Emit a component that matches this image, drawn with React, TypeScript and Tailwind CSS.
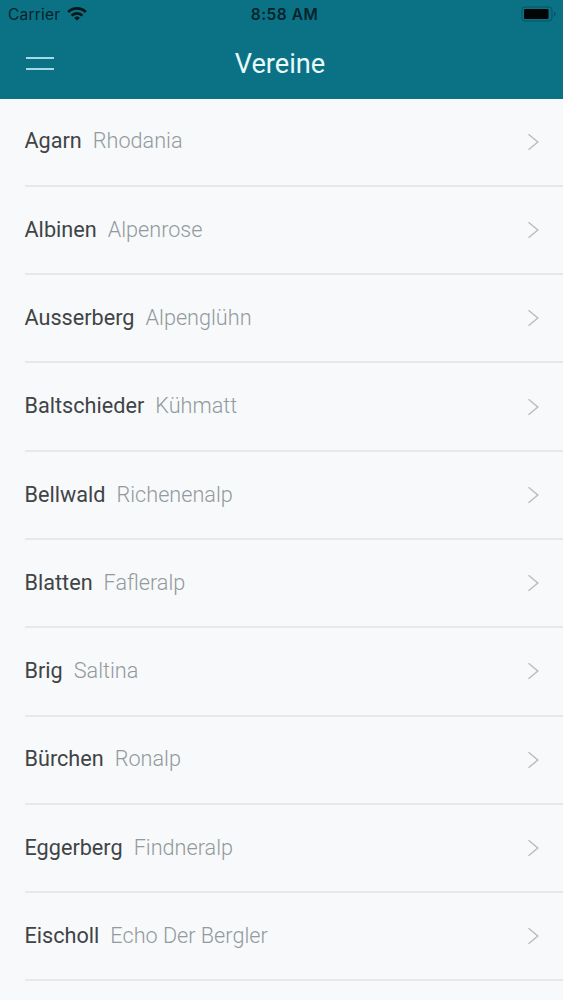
interface Club {
  place: string;
  name: string;
}

const CLUBS: Club[] = [
  { place: "Agarn", name: "Rhodania" },
  { place: "Albinen", name: "Alpenrose" },
  { place: "Ausserberg", name: "Alpenglühn" },
  { place: "Baltschieder", name: "Kühmatt" },
  { place: "Bellwald", name: "Richenenalp" },
  { place: "Blatten", name: "Fafleralp" },
  { place: "Brig", name: "Saltina" },
  { place: "Bürchen", name: "Ronalp" },
  { place: "Eggerberg", name: "Findneralp" },
  { place: "Eischoll", name: "Echo Der Bergler" },
];

function WifiIcon() {
  return (
    <svg width="20" height="14" viewBox="0 0 20 14" fill="none" stroke="#03171b" strokeWidth="2.6">
      <path d="M1.2 5a12.4 12.4 0 0 1 17.6 0" />
      <path d="M4.6 8.6a7.6 7.6 0 0 1 10.8 0" />
      <path d="M10 13.6 7.2 10.9a4 4 0 0 1 5.6 0z" fill="#03171b" stroke="none" />
    </svg>
  );
}

function BatteryIcon() {
  return (
    <svg width="35" height="16" viewBox="0 0 35 16">
      <rect x="1" y="1" width="30" height="14" rx="3" fill="none" stroke="#075361" />
      <rect x="3" y="3" width="24.5" height="10" rx="1.2" fill="#020607" />
      <path d="M33 5.8c2.2.7 2.2 3.9 0 4.6z" fill="#075361" />
    </svg>
  );
}

function StatusBar() {
  return (
    <div className="grid h-7 grid-cols-3 items-center pr-[7px] pl-[8px] text-[#04232a]">
      <div className="flex items-center gap-[7px]">
        <span className="pt-[2px] text-[15.5px] tracking-[0.2px]">Carrier</span>
        <WifiIcon />
      </div>
      <span className="pt-[2px] pl-[5px] text-center text-[15.5px] font-semibold tracking-[0.5px]">8:58 AM</span>
      <div className="flex justify-end">
        <BatteryIcon />
      </div>
    </div>
  );
}

function Header() {
  return (
    <header className="h-[99px] bg-[#0b7285] font-['Inter','Liberation_Sans',sans-serif]">
      <StatusBar />
      <div className="grid h-[71px] grid-cols-[60px_1fr_60px] items-center">
        <button aria-label="Menu" className="ml-[25.5px] flex w-[28px] flex-col gap-[9px]">
          <span className="h-[2px] bg-[#a5dbe6]" />
          <span className="h-[2px] bg-[#a5dbe6]" />
        </button>
        <h1 className="pt-[2px] pr-[3px] text-center font-['Roboto',sans-serif] text-[27.2px] text-[#e8fafc]">
          Vereine
        </h1>
      </div>
    </header>
  );
}

function ClubRow({ club }: { club: Club }) {
  return (
    <li className="ml-[24.5px] flex h-[88.3px] items-center border-b-2 border-[#e6e9eb] pr-6">
      <span className="text-[21.65px] text-[#3f4447]">{club.place}</span>
      <span className="ml-[11px] text-[21.65px] font-light text-[#929a9e]">{club.name}</span>
      <svg className="ml-auto" width="12" height="18" viewBox="0 0 12 18" fill="none" stroke="#b9bec2" strokeWidth="1.5">
        <path d="M1.5 1.2l9.3 7.8-9.3 7.8" />
      </svg>
    </li>
  );
}

export default function App() {
  return (
    <div className="h-[1000px] w-[563px] overflow-hidden bg-[#f8f9fa] font-['Roboto',sans-serif]">
      <Header />
      <ul className="-mt-[0.5px]">
        {CLUBS.map((club) => (
          <ClubRow key={club.place} club={club} />
        ))}
      </ul>
    </div>
  );
}
